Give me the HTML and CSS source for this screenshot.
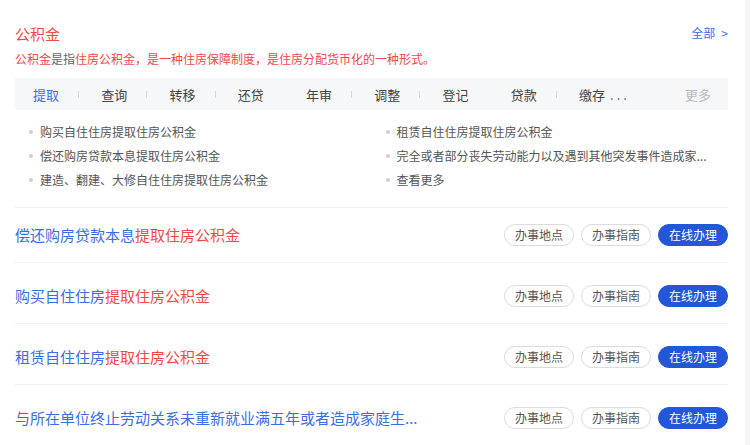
FILE: index.html
```html
<!DOCTYPE html>
<html lang="zh-CN">
<head>
<meta charset="utf-8">
<title>公积金</title>
<link rel="stylesheet" href="styles.css">
</head>
<body>
<div class="card">
  <div class="head">
    <div class="title">公积金</div>
    <a class="all">全部<span class="arrow">&gt;</span></a>
  </div>
  <p class="desc">公积金<span class="gray">是指</span>住房公积金，是一种住房保障制度，是住房分配货币化的一种形式。</p>
  <div class="tabs">
    <span class="tab active sep">提取</span>
    <span class="tab sep">查询</span>
    <span class="tab sep">转移</span>
    <span class="tab">还贷</span>
    <span class="tab sep">年审</span>
    <span class="tab sep">调整</span>
    <span class="tab">登记</span>
    <span class="tab sep">贷款</span>
    <span class="tab">缴存<span class="dots">...</span></span>
    <span class="more">更多</span>
  </div>
  <ul class="links">
    <li>购买自住住房提取住房公积金</li>
    <li>租赁自住住房提取住房公积金</li>
    <li>偿还购房贷款本息提取住房公积金</li>
    <li>完全或者部分丧失劳动能力以及遇到其他突发事件造成家...</li>
    <li>建造、翻建、大修自住住房提取住房公积金</li>
    <li>查看更多</li>
  </ul>
  <div class="row first">
    <div class="row-title">偿还购房贷款本息<span class="hl">提取住房公积金</span></div>
    <div class="btns"><span class="btn">办事地点</span><span class="btn">办事指南</span><span class="btn primary">在线办理</span></div>
  </div>
  <div class="row">
    <div class="row-title">购买自住住房<span class="hl">提取住房公积金</span></div>
    <div class="btns"><span class="btn">办事地点</span><span class="btn">办事指南</span><span class="btn primary">在线办理</span></div>
  </div>
  <div class="row">
    <div class="row-title">租赁自住住房<span class="hl">提取住房公积金</span></div>
    <div class="btns"><span class="btn">办事地点</span><span class="btn">办事指南</span><span class="btn primary">在线办理</span></div>
  </div>
  <div class="row">
    <div class="row-title">与所在单位终止劳动关系未重新就业满五年或者造成家庭生...</div>
    <div class="btns"><span class="btn">办事地点</span><span class="btn">办事指南</span><span class="btn primary">在线办理</span></div>
  </div>
</div>
</body>
</html>
```

FILE: styles.css
```css
* { box-sizing: border-box; }
html, body {
  margin: 0;
  padding: 0;
  background: #f5f6f8;
  font-family: "Noto Sans CJK SC", "Noto Sans", sans-serif;
}
.card {
  width: 745px;
  height: 445px;
  background: #fff;
  padding: 23px 17px 0 15px;
  overflow: hidden;
}
.head {
  display: flex;
  justify-content: space-between;
  align-items: center;
  height: 22px;
}
.title {
  font-size: 15px;
  line-height: 22px;
  color: #f24848;
}
.all {
  font-size: 12px;
  color: #3b6ee6;
  line-height: 20px;
  margin-top: -2px;
  display: flex;
  align-items: center;
}
.arrow { margin-left: 6px; }
.desc {
  margin: 5px 0 0;
  font-size: 12px;
  line-height: 18px;
  color: #f24848;
}
.gray { color: #666; }
.tabs {
  margin-top: 10px;
  height: 32px;
  background: #f6f7f9;
  display: flex;
  align-items: center;
  padding: 0 17px 0 18px;
}
.tab {
  width: 68.25px;
  flex: none;
  display: flex;
  align-items: center;
  font-size: 13px;
  color: #444;
  white-space: nowrap;
}
.tab.active { color: #3b6ee6; }
.tab.sep::after {
  content: "";
  display: block;
  width: 1px;
  height: 7px;
  background: #d8d8d8;
  margin-left: 19px;
}
.dots {
  margin-left: 5px;
  letter-spacing: 3px;
  color: #666;
}
.more {
  margin-left: auto;
  font-size: 13px;
  color: #bbb;
}
.links {
  list-style: none;
  margin: 0;
  padding: 10px 0 15px;
  display: grid;
  grid-template-columns: 1fr 1fr;
  border-bottom: 1px solid #efefef;
}
.links li {
  display: flex;
  align-items: center;
  padding-left: 14px;
  font-size: 12px;
  line-height: 24px;
  color: #555;
  white-space: nowrap;
}
.links li::before {
  content: "";
  width: 4px;
  height: 4px;
  border-radius: 50%;
  background: #cfcfcf;
  margin-right: 7px;
  flex: none;
}
.row {
  display: flex;
  align-items: center;
  justify-content: space-between;
  padding: 22px 0 16px;
  border-bottom: 1px solid #f0f0f0;
}
.row.first { padding: 16px 0; }
.row-title {
  font-size: 15px;
  line-height: 22px;
  color: #3b6ee6;
  white-space: nowrap;
}
.hl { color: #f24848; }
.btns {
  display: flex;
  gap: 7px;
}
.btn {
  width: 70px;
  height: 22px;
  border: 1px solid #dcdcdc;
  border-radius: 11px;
  font-size: 12px;
  line-height: 20px;
  text-align: center;
  color: #555;
  background: #fff;
}
.btn.primary {
  background: #2356d8;
  border-color: #2356d8;
  color: #fff;
}
```
